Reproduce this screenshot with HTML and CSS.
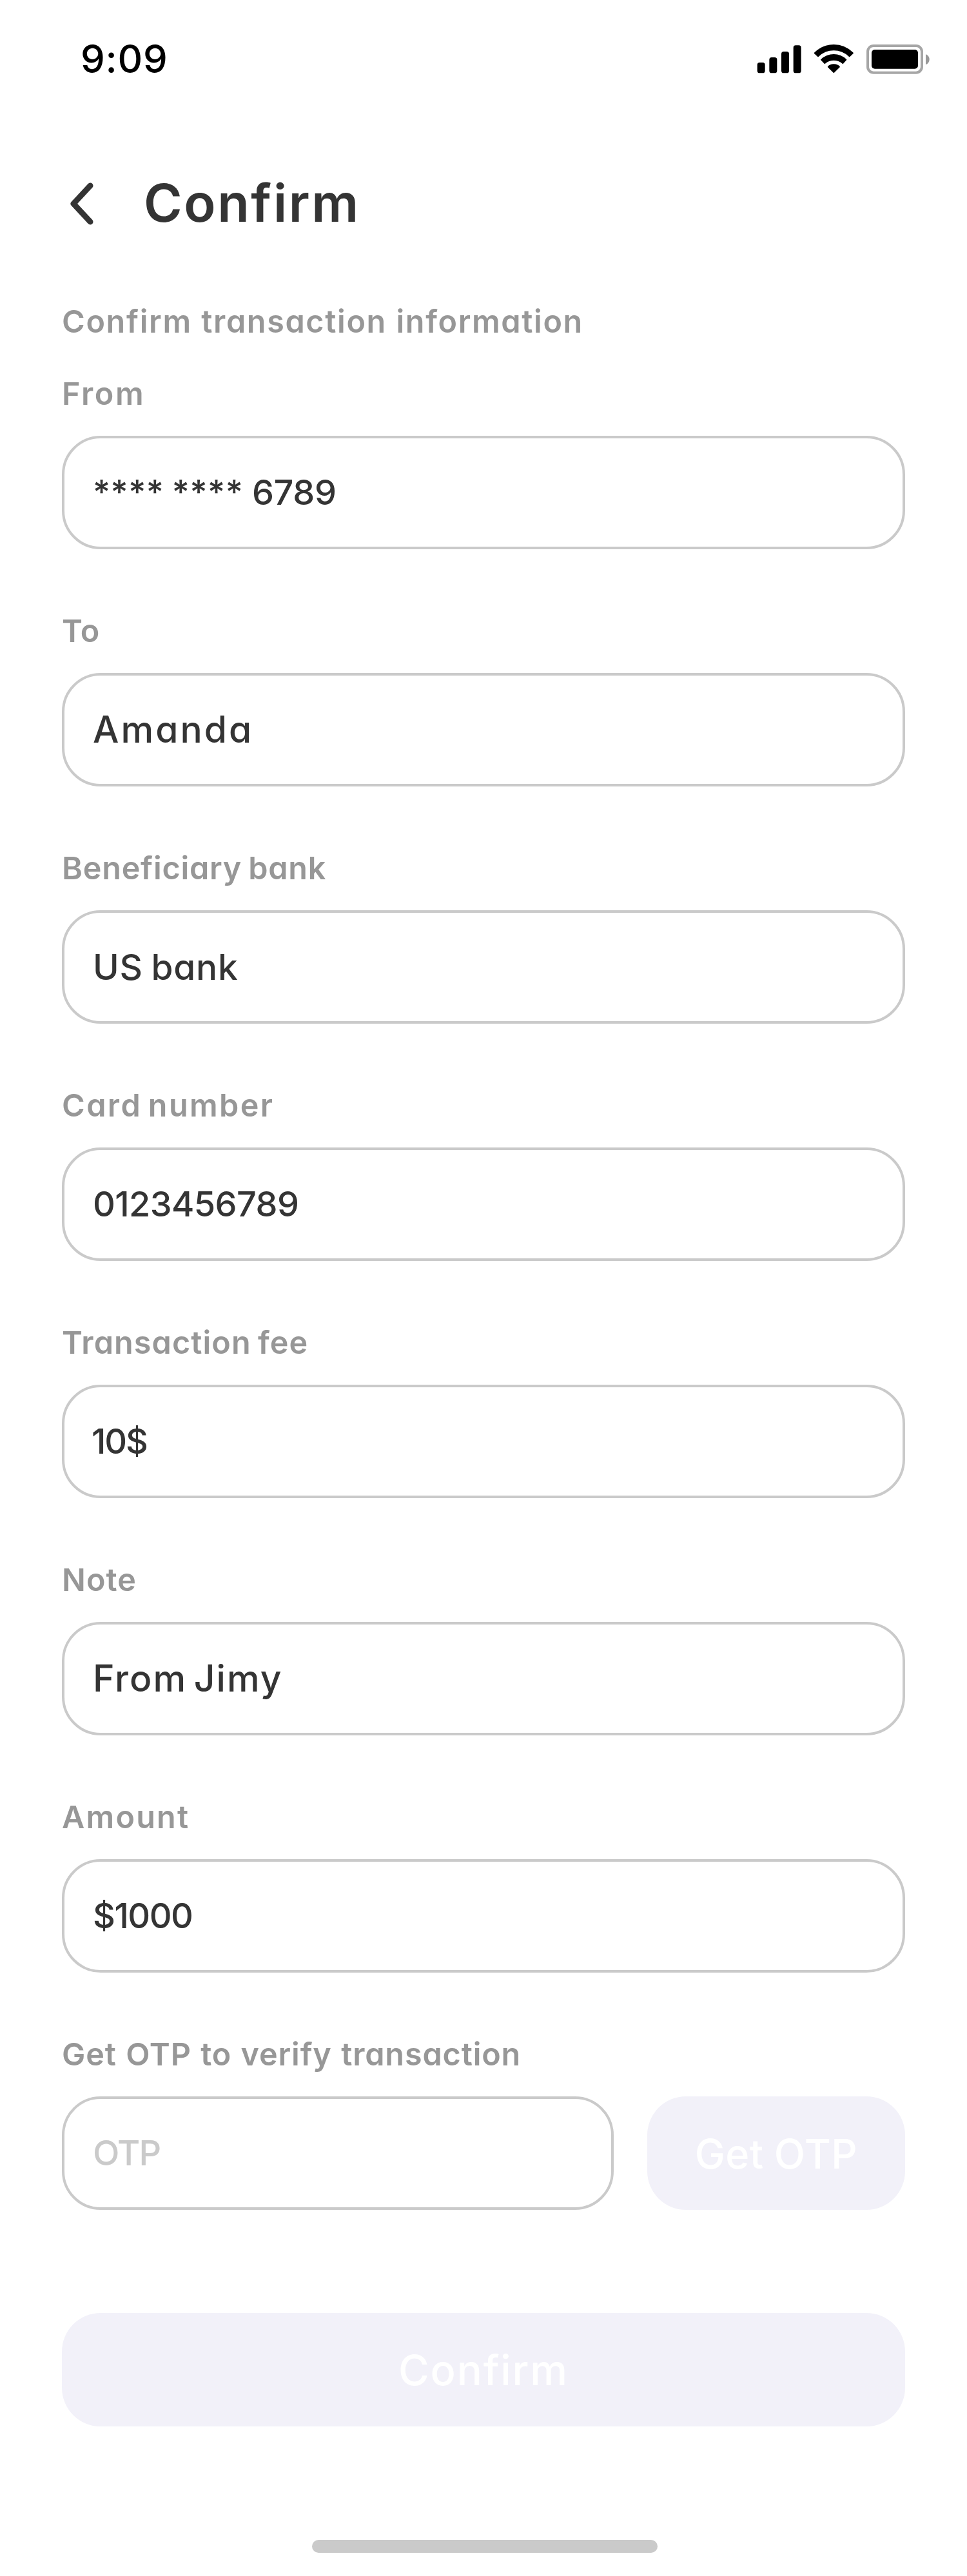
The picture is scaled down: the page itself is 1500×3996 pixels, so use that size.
FILE: index.html
```html
<!DOCTYPE html>
<html lang="en">
<head>
<meta charset="utf-8">
<title>Confirm</title>
<link rel="stylesheet" href="styles.css">
</head>
<body>
<div class="screen">
  <header class="status-bar">
    <span class="status-time">9:09</span>
    <svg class="status-icons" viewBox="102 84 810 144" aria-hidden="true">
      <!-- signal -->
      <rect x="104" y="171" width="36" height="49" rx="11"/>
      <rect x="160" y="147" width="36" height="73" rx="11"/>
      <rect x="216" y="120" width="36" height="100" rx="11"/>
      <rect x="272" y="91" width="36" height="129" rx="11"/>
      <!-- wifi -->
      <path d="M369 125 Q408 87 460 87 Q512 87 551 125 Q552 127 551 129 L535 144 Q533 146 531 144 Q501 115 460 115 Q419 115 389 144 Q387 146 385 144 L369 129 Q368 127 369 125Z"/>
      <path d="M400 156 Q426 132 460 132 Q494 132 519 156 Q521 158 519 160 L504 176 Q502 178 500 176 Q483 161 460 161 Q437 161 420 176 Q418 178 416 176 L400 160 Q398 158 400 156Z"/>
      <path d="M432 189 Q443 178 460 178 Q477 178 488 189 Q489 191 488 193 L462 218 Q460 220 458 218 L432 193 Q431 191 432 189Z"/>
      <!-- battery -->
      <rect class="battery-case" x="618" y="93" width="252" height="125" rx="27"/>
      <rect x="636" y="111" width="216" height="89" rx="15"/>
      <path class="battery-cap" d="M888 132 Q905 140 905 156.500 Q905 173 888 181Z"/>
    </svg>
  </header>

  <div class="nav">
    <svg class="back" viewBox="0 0 36 66" aria-hidden="true"><path d="M31 5 L5 33 L31 61"/></svg>
    <h1 class="title">Confirm</h1>
  </div>

  <main class="form">
    <p class="label intro">Confirm transaction information</p>
    <section class="field">
      <p class="label label-from">From</p>
      <div class="box"><span class="stars">**** ****</span><span class="digits">6789</span></div>
    </section>
    <section class="field">
      <p class="label label-to">To</p>
      <div class="box"><span class="name">Amanda</span></div>
    </section>
    <section class="field">
      <p class="label label-beneficiary">Beneficiary bank</p>
      <div class="box"><span class="bank">US bank</span></div>
    </section>
    <section class="field">
      <p class="label label-card">Card number</p>
      <div class="box"><span class="card-number">0123456789</span></div>
    </section>
    <section class="field">
      <p class="label label-fee">Transaction fee</p>
      <div class="box"><span class="fee">10$</span></div>
    </section>
    <section class="field">
      <p class="label label-note">Note</p>
      <div class="box"><span class="note">From Jimy</span></div>
    </section>
    <section class="field">
      <p class="label label-amount">Amount</p>
      <div class="box"><span class="amount">$1000</span></div>
    </section>
    <section class="field">
      <p class="label label-otp">Get OTP to verify transaction</p>
      <div class="otp-row">
        <div class="box"><span class="placeholder">OTP</span></div>
        <div class="button button-otp"><span class="get-otp">Get OTP</span></div>
      </div>
    </section>
    <div class="button button-confirm"><span class="confirm">Confirm</span></div>
  </main>

  <div class="home-indicator"></div>
</div>
</body>
</html>
```
FILE: styles.css
```css
* {
  box-sizing: border-box;
  margin: 0;
  padding: 0;
}

body {
  background: #fff;
  color: #343434;
  font-family: Inter, "Liberation Sans", sans-serif;
  font-feature-settings: "cv11";
}

.screen {
  width: 1500px;
  height: 3996px;
  display: flex;
  flex-direction: column;
}

.status-bar {
  height: 184px;
  padding: 0 56px 0 125px;
  display: flex;
  justify-content: space-between;
}

.status-time {
  padding-top: 61px;
  font-size: 60px;
  line-height: 60px;
  font-weight: 500;
  letter-spacing: 0.76px;
  color: #000;
}

.status-icons {
  width: 270px;
  height: 48px;
  margin-top: 68px;
  fill: #000;
}

.battery-case {
  fill: none;
  stroke: #a6a6a6;
  stroke-width: 12;
}

.battery-cap {
  fill: #999;
}

.nav {
  height: 264px;
  padding: 84px 0 0 109px;
  display: flex;
  align-items: flex-start;
  gap: 78px;
}

.back {
  width: 36px;
  height: 66px;
  margin-top: 15px;
  fill: none;
  stroke: #343434;
  stroke-width: 9;
  stroke-linecap: round;
  stroke-linejoin: round;
}

.title {
  font-size: 81px;
  line-height: 95px;
  font-weight: 600;
  letter-spacing: 2.6px;
}

.form {
  width: 1308px;
  margin: 0 96px;
  padding-top: 27px;
}

.label {
  height: 48px;
  font-size: 48.5px;
  line-height: 48px;
  font-weight: 600;
  color: #979797;
  white-space: nowrap;
}

.intro { margin-bottom: 64px; letter-spacing: 1.65px; word-spacing: 0.72px; }
.label-from { letter-spacing: 2.62px; }
.label-to { letter-spacing: 0.47px; }
.label-beneficiary { letter-spacing: 0.78px; word-spacing: -3px; }
.label-card { letter-spacing: 2.4px; word-spacing: -4.8px; }
.label-fee { letter-spacing: 1.1px; word-spacing: -3px; }
.label-note { letter-spacing: 1.1px; }
.label-amount { letter-spacing: 2.23px; }
.label-otp { letter-spacing: 0.87px; word-spacing: 1.3px; }

.field {
  height: 265px;
  margin-bottom: 103px;
  display: flex;
  flex-direction: column;
  justify-content: space-between;
}

.box {
  height: 176px;
  padding-left: 44px;
  display: flex;
  align-items: center;
  border: 4px solid #cacaca;
  border-radius: 60px;
  font-size: 54px;
  line-height: 64px;
  font-weight: 500;
  white-space: nowrap;
}

.stars {
  width: 247px;
  font-size: 52px;
  letter-spacing: 0.55px;
  word-spacing: -2.02px;
}
.digits { letter-spacing: -0.4px; }
.name { font-size: 57px; letter-spacing: 3.06px; }
.bank { font-size: 55px; letter-spacing: 0.8px; word-spacing: -2.78px; }
.card-number { letter-spacing: -0.6px; }
.fee { margin-left: -2px; letter-spacing: -2.14px; }
.note { font-size: 57px; letter-spacing: 2px; word-spacing: -6.5px; }
.amount { letter-spacing: -1.5px; }
.placeholder { letter-spacing: -1.71px; color: #cacaca; }

.otp-row {
  display: flex;
  justify-content: space-between;
}

.otp-row .box {
  width: 856px;
}

.button {
  height: 176px;
  padding-top: 2px;
  display: flex;
  align-items: center;
  justify-content: center;
  border-radius: 60px;
  background: #f2f1f9;
  color: #fff;
  line-height: 72px;
  font-weight: 500;
}

.button-otp { width: 400px; }
.get-otp { font-size: 63px; letter-spacing: 0.49px; word-spacing: -1.22px; }
.button-confirm { margin-top: 160px; }
.confirm { font-size: 65px; letter-spacing: 1.84px; }

.field:nth-last-child(2) { margin-bottom: 0; }

.home-indicator {
  width: 536px;
  height: 20px;
  margin: auto auto 36px 484px;
  border-radius: 10px;
  background: #cacaca;
}
```
